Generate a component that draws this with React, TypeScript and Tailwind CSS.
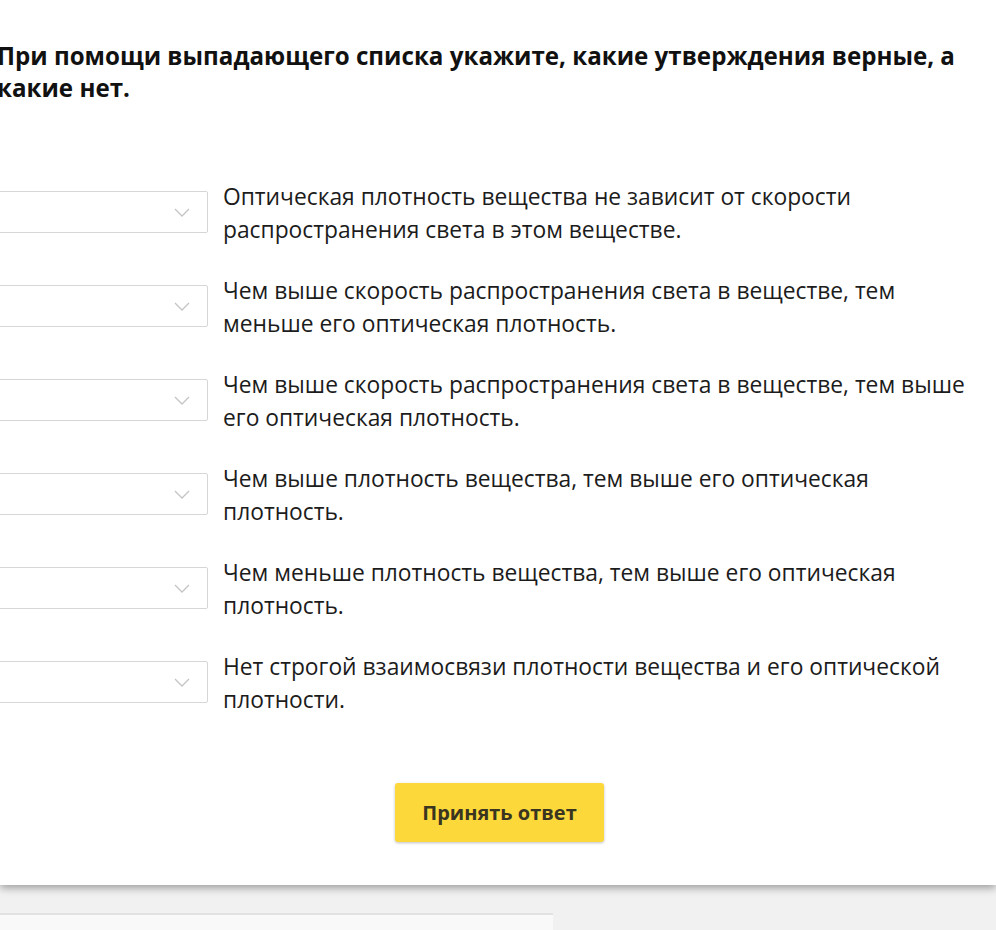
const statements = [
  "Оптическая плотность вещества не зависит от скорости распространения света в этом веществе.",
  "Чем выше скорость распространения света в веществе, тем меньше его оптическая плотность.",
  "Чем выше скорость распространения света в веществе, тем выше его оптическая плотность.",
  "Чем выше плотность вещества, тем выше его оптическая плотность.",
  "Чем меньше плотность вещества, тем выше его оптическая плотность.",
  "Нет строгой взаимосвязи плотности вещества и его оптической плотности.",
];

function Chevron() {
  return (
    <svg width="16" height="9" viewBox="0 0 16 9" fill="none" className="shrink-0">
      <path d="M1 1l7 7 7-7" stroke="#c4c4c4" strokeWidth="1.3" />
    </svg>
  );
}

export default function App() {
  return (
    <div
      className="min-h-[930px] w-full overflow-hidden bg-[#f1f1f1]"
      style={{ fontFamily: '"Open Sans", "Noto Sans", sans-serif' }}
    >
      <div className="relative z-10 h-[885px] bg-white pt-[40px] shadow-[0_3px_8px_rgba(0,0,0,0.35)]">
        <h1 className="-ml-[3px] pr-[20px] text-[24.15px] font-bold leading-[32px] text-[#111]">
          При помощи выпадающего списка укажите, какие утверждения верные, а какие нет.
        </h1>

        <div className="mt-[76px] flex flex-col gap-[28px]">
          {statements.map((s, i) => (
            <div key={i} className="flex items-start gap-[15px]">
              <div className="-ml-[4px] mt-[11px] flex h-[42px] w-[212px] shrink-0 items-center justify-end rounded-[2px] border border-[#d6d6d6] bg-white pr-[17px]">
                <Chevron />
              </div>
              <p className="flex-1 pr-[18px] text-[22.8px] leading-[33px] text-[#1c1c1c]">{s}</p>
            </div>
          ))}
        </div>

        <div className="mt-[67px] flex justify-center pl-[3px]">
          <button className="h-[59px] w-[209px] rounded-[3px] bg-[#fdd83b] text-[20px] font-bold text-[#3a3520] shadow-[0_1px_3px_rgba(0,0,0,0.25)]">
            Принять ответ
          </button>
        </div>
      </div>

      <div className="pt-[28px]">
        <div className="h-[20px] w-[553px] border-t-[2px] border-[#e2e2e2] bg-[#f9f9f9]" />
      </div>
    </div>
  );
}
